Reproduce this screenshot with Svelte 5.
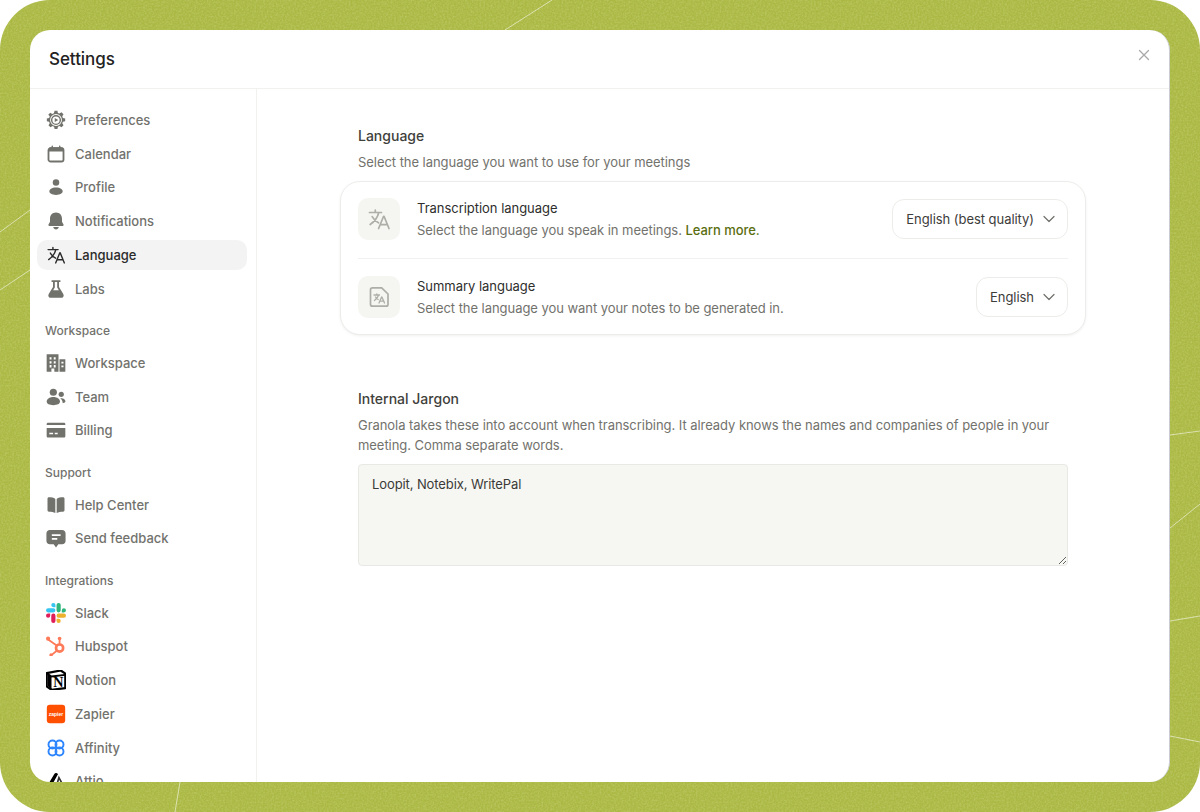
<script>
  const general = [
    { id: 'gear', label: 'Preferences' },
    { id: 'calendar', label: 'Calendar' },
    { id: 'person', label: 'Profile' },
    { id: 'bell', label: 'Notifications' },
    { id: 'translate', label: 'Language', active: true },
    { id: 'flask', label: 'Labs' }
  ];
  const sections = [
    { title: 'Workspace', items: [
      { id: 'building', label: 'Workspace' },
      { id: 'team', label: 'Team' },
      { id: 'card', label: 'Billing' }
    ]},
    { title: 'Support', items: [
      { id: 'book', label: 'Help Center' },
      { id: 'chat', label: 'Send feedback' }
    ]},
    { title: 'Integrations', items: [
      { id: 'slack', label: 'Slack' },
      { id: 'hubspot', label: 'Hubspot' },
      { id: 'notion', label: 'Notion' },
      { id: 'zapier', label: 'Zapier' },
      { id: 'affinity', label: 'Affinity' },
      { id: 'attio', label: 'Attio' }
    ]}
  ];
  const streaks = [
    'M505 30 L552 0', 'M0 232 L30 210', 'M0 290 L30 270', 'M175 812 L180 782',
    'M1170 435 L1200 431', 'M1170 528 L1200 504', 'M1170 621 L1200 616', 'M1170 736 L1200 742'
  ];
</script>

{#snippet translate()}
  <path class="line" d="M2.500 5.500h12M8.300 3v2.500M11.800 5.500c-1 4.200-4.300 9-8.600 12M5.200 9.600c1.500 2.700 3.600 4.900 6.300 6.200M11.600 21.500l5-12.200h.4l5 12.200M13.300 17.600h7"/>
{/snippet}

{#snippet icon(id)}
  <svg class="ico" viewBox="0 0 24 24" aria-hidden="true">
    {#if id === 'gear'}
      <path fill-rule="evenodd" d="M10.300.8h3.400l.6 2.700 1.900.8 2.400-1.500 2.400 2.400-1.500 2.400.8 1.900 2.700.6v3.400l-2.700.6-.8 1.900 1.500 2.400-2.400 2.400-2.400-1.500-1.900.8-.6 2.700h-3.400l-.6-2.700-1.900-.8-2.400 1.500-2.400-2.400 1.500-2.400-.8-1.900-2.700-.6v-3.400l2.700-.6.8-1.900L2.700 5.600l2.400-2.400 2.400 1.500 1.900-.8zM12 4.900a7.100 7.100 0 1 0 0 14.200 7.100 7.100 0 0 0 0-14.200z"/>
      <circle cx="12" cy="12" r="5.200" class="line"/>
      <path d="M10.500 9.500l4.200 2.500-4.200 2.500z"/>
    {:else if id === 'calendar'}
      <rect x="3" y="5" width="18" height="16" rx="2.500" class="line thick"/>
      <path d="M3 6.500A2.500 2.500 0 0 1 5.500 4h13A2.500 2.500 0 0 1 21 6.500V9H3z"/>
      <path class="line" d="M7.500 2.500v3M16.500 2.500v3"/>
    {:else if id === 'person'}
      <circle cx="12" cy="6.600" r="3.900"/>
      <path d="M12 12.600c5.200 0 8 2.300 8 4.600 0 2.400-3 4.300-8 4.300s-8-1.900-8-4.300c0-2.300 2.800-4.600 8-4.600z"/>
    {:else if id === 'bell'}
      <path d="M12 1.800c4.600 0 7.200 3.400 7.200 7.600v3.400l1.800 3.400c.4.900-.1 1.800-1 1.800H4c-.9 0-1.400-.9-1-1.800l1.800-3.400V9.400c0-4.200 2.600-7.600 7.200-7.600z"/>
      <path d="M8.600 19.300h6.800c-.4 1.800-1.800 2.900-3.400 2.900s-3-1.100-3.400-2.900z"/>
    {:else if id === 'translate'}
      {@render translate()}
    {:else if id === 'flask'}
      <path class="line thick" d="M7.500 2.500h9M9.500 2.500v7.500L4.200 18.500c-.9 1.600.1 3 1.800 3h12c1.700 0 2.700-1.400 1.800-3L14.500 10V2.500"/>
      <path d="M7 13.500h10l3 5c.7 1.300-.1 3-1.600 3H5.600c-1.500 0-2.300-1.700-1.600-3z"/>
    {:else if id === 'building'}
      <path fill-rule="evenodd" d="M.800 1.500H15v21h-5v-3.800H6.500v3.800H.800zM4.300 5v2.800h2.300V5zm5 0v2.800h2.300V5zM4.300 9.800v2.800h2.300V9.800zm5 0v2.800h2.300V9.800zM4.300 14.500v2.800h2.300v-2.800zm5 0v2.800h2.300v-2.800z"/>
      <path fill-rule="evenodd" d="M16.200 7.500h7v15h-7zm2.300 3v2.200h2.500v-2.200zm0 4.500v2.200h2.500V15z"/>
    {:else if id === 'team'}
      <circle cx="8.800" cy="6.300" r="4.300"/>
      <path d="M8.800 12c5 0 8 2.700 8 5.500 0 2.800-3.300 4.300-8 4.300S.800 20.300.800 17.500c0-2.800 3-5.500 8-5.500z"/>
      <circle cx="18.300" cy="8.800" r="3.100"/>
      <path d="M18.500 13.500c3 .1 4.800 1.900 4.800 3.700 0 1.100-.9 2-3.200 2.200-.1-2.300-1.100-4.300-3.100-5.800.5-.1 1-.1 1.500-.1z"/>
    {:else if id === 'card'}
      <path fill-rule="evenodd" d="M.800 5c0-.9.700-1.600 1.600-1.600h19.200c.9 0 1.600.7 1.600 1.600v1H.800zM.800 9.500h22.400v10c0 .9-.7 1.600-1.600 1.600H2.400c-.9 0-1.600-.7-1.600-1.600zM4 15.300v1.700h4.500v-1.700zm6.500 0v1.700h3.500v-1.700z"/>
    {:else if id === 'book'}
      <path d="M1.800 4.500C1.800 3.500 2.500 2.800 3.500 2.800c3 0 5.700.5 7.700 1.900V21.700c-2-1.200-4.700-1.700-7.700-1.700-1 0-1.700-.7-1.700-1.700z"/>
      <path d="M22.200 4.500c0-1-.7-1.700-1.700-1.700-3 0-5.700.5-7.700 1.900V21.700c2-1.200 4.700-1.700 7.700-1.700 1 0 1.700-.7 1.700-1.700z"/>
    {:else if id === 'chat'}
      <path fill-rule="evenodd" d="M4.500 2.500h15c2.200 0 4 1.800 4 4v9c0 2.200-1.800 4-4 4h-4.700L12 23.300 9.200 19.500H4.500c-2.200 0-4-1.800-4-4v-9c0-2.200 1.800-4 4-4zM7 7.500v2h10.500v-2zm0 4.500v2h6.500v-2z"/>
    {:else if id === 'slack'}
      <path fill="#E01E5A" d="M5.042 15.165a2.528 2.528 0 0 1-2.520 2.523A2.528 2.528 0 0 1 0 15.165a2.527 2.527 0 0 1 2.522-2.520h2.520v2.520zM6.313 15.165a2.527 2.527 0 0 1 2.521-2.520 2.527 2.527 0 0 1 2.521 2.520v6.313A2.528 2.528 0 0 1 8.834 24a2.528 2.528 0 0 1-2.521-2.522v-6.313z"/>
      <path fill="#36C5F0" d="M8.834 5.042a2.528 2.528 0 0 1-2.521-2.520A2.528 2.528 0 0 1 8.834 0a2.528 2.528 0 0 1 2.521 2.522v2.520H8.834zM8.834 6.313a2.528 2.528 0 0 1 2.521 2.521 2.528 2.528 0 0 1-2.521 2.521H2.522A2.528 2.528 0 0 1 0 8.834a2.528 2.528 0 0 1 2.522-2.521h6.312z"/>
      <path fill="#2EB67D" d="M18.956 8.834a2.528 2.528 0 0 1 2.522-2.521A2.528 2.528 0 0 1 24 8.834a2.528 2.528 0 0 1-2.522 2.521h-2.522V8.834zM17.688 8.834a2.528 2.528 0 0 1-2.523 2.521 2.527 2.527 0 0 1-2.520-2.521V2.522A2.527 2.527 0 0 1 15.165 0a2.528 2.528 0 0 1 2.523 2.522v6.312z"/>
      <path fill="#ECB22E" d="M15.165 18.956a2.528 2.528 0 0 1 2.523 2.522A2.528 2.528 0 0 1 15.165 24a2.527 2.527 0 0 1-2.520-2.522v-2.522h2.520zM15.165 17.688a2.527 2.527 0 0 1-2.520-2.523 2.526 2.526 0 0 1 2.520-2.520h6.313A2.527 2.527 0 0 1 24 15.165a2.528 2.528 0 0 1-2.522 2.523h-6.313z"/>
    {:else if id === 'hubspot'}
      <g fill="none" stroke="#FF7A59" stroke-linecap="round">
        <circle cx="16.300" cy="14.500" r="4.300" stroke-width="3.200"/>
        <path stroke-width="2.200" d="M16.300 9V3.500M12.800 11.500L3 4.500M12.500 18L6.500 23"/>
      </g>
      <circle cx="16.300" cy="3" r="2.200" fill="#FF7A59"/>
      <circle cx="2.500" cy="3.200" r="2.500" fill="#FF7A59"/>
      <circle cx="6" cy="22.800" r="2" fill="#FF7A59"/>
    {:else if id === 'notion'}
      <path d="M.800 3.800L17.800.600l5.400 3.800V21.800L6.600 23.700.800 19.600z" fill="#fff" stroke="#000" stroke-width="2.700" stroke-linejoin="round"/>
      <path d="M.800 3.800L6.600 7.800 23 5.800" fill="none" stroke="#000" stroke-width="2.200"/>
      <path d="M2 5v14l4.600 4V8z" fill="#000"/>
      <text x="14.800" y="20.600" text-anchor="middle" class="ntext">N</text>
    {:else if id === 'zapier'}
      <rect x="1" y="1" width="22" height="22" rx="3.500" fill="#FF4F00"/>
      <text x="12" y="14" text-anchor="middle" class="ztext">zapier</text>
    {:else if id === 'affinity'}
      <g fill="none" stroke="#2C85FF" stroke-width="2.300">
        <circle cx="7.800" cy="7.800" r="4.800"/>
        <circle cx="16.200" cy="7.800" r="4.800"/>
        <circle cx="7.800" cy="16.200" r="4.800"/>
        <circle cx="16.200" cy="16.200" r="4.800"/>
      </g>
    {:else if id === 'attio'}
      <path d="M2 17L10 3.500c.6-1 2-1.500 3-.9l1.500.9L6 19H3.500c-1.200 0-2.100-1-1.500-2z" fill="#000"/>
      <path d="M15.500 8L21 18c.4.800-.1 1.500-1 1.500h-8z" fill="none" stroke="#333" stroke-width="2"/>
    {/if}
  </svg>
{/snippet}

{#snippet chevron()}
  <svg class="chev" viewBox="0 0 12 8" aria-hidden="true"><path d="M1 1.500l5 5 5-5"/></svg>
{/snippet}

{#snippet navItem(item)}
  <div class="item" class:active={item.active}>
    {@render icon(item.id)}
    <span>{item.label}</span>
  </div>
{/snippet}

<div class="page">
  <svg class="backdrop" viewBox="0 0 1200 812" aria-hidden="true">
    <filter id="grain" x="0" y="0" width="100%" height="100%">
      <feTurbulence type="fractalNoise" baseFrequency="0.55" numOctaves="2" seed="4"/>
      <feColorMatrix values="0 0 0 0 .85  0 0 0 0 .88  0 0 0 0 .5  0 0 0 -1.100 .72"/>
    </filter>
    <rect width="1200" height="812" filter="url(#grain)" opacity=".4"/>
    {#each streaks as d}
      <path d={d} fill="none" stroke="#fff" stroke-opacity=".55" stroke-width="1"/>
    {/each}
  </svg>

  <div class="modal">
    <header>
      <h1>Settings</h1>
      <svg class="close" viewBox="0 0 12 12" aria-hidden="true"><path d="M1.500 1.500l9 9M10.500 1.500l-9 9"/></svg>
    </header>
    <div class="body">
      <aside>
        {#each general as item}
          {@render navItem(item)}
        {/each}
        {#each sections as section}
          <div class="label">{section.title}</div>
          {#each section.items as item}
            {@render navItem(item)}
          {/each}
        {/each}
      </aside>
      <main>
        <h2>Language</h2>
        <p class="sub">Select the language you want to use for your meetings</p>
        <section class="card">
          <div class="row first">
            <div class="tile">
              <svg class="tile-ico" viewBox="0 0 24 24" aria-hidden="true">{@render translate()}</svg>
            </div>
            <div class="copy">
              <div class="name">Transcription language</div>
              <div class="desc">Select the language you speak in meetings. <a href="#learn">Learn more.</a></div>
            </div>
            <div class="select"><span>English (best quality)</span>{@render chevron()}</div>
          </div>
          <div class="rule"></div>
          <div class="row second">
            <div class="tile">
              <svg class="tile-ico" viewBox="0 0 24 24" aria-hidden="true">
                <path class="line" d="M5.500 2.800h9.200L21 9v10.200c0 1.100-.9 2-2 2H5.500c-1.100 0-2-.9-2-2V4.800c0-1.100.9-2 2-2z"/>
                <path class="line thin" d="M7 10h5.500M9.800 9v1M11.500 10c-.5 2-2 4-4 5.500M8.500 12c.7 1 1.500 1.800 2.700 2.500M12 18l2.600-6h.3l2.600 6M13 16.200h4"/>
              </svg>
            </div>
            <div class="copy">
              <div class="name">Summary language</div>
              <div class="desc">Select the language you want your notes to be generated in.</div>
            </div>
            <div class="select"><span>English</span>{@render chevron()}</div>
          </div>
        </section>
        <h2 class="jargon">Internal Jargon</h2>
        <p class="para">Granola takes these into account when transcribing. It already knows the names and companies of people in your meeting. Comma separate words.</p>
        <textarea readonly value="Loopit, Notebix, WritePal"></textarea>
      </main>
    </div>
  </div>
</div>

<style>
  :global(body) { margin: 0; background: #fff; }
  .page {
    position: relative;
    width: 1200px;
    height: 812px;
    box-sizing: border-box;
    padding: 30px;
    overflow: hidden;
    border-radius: 50px;
    background: #abb944;
    font-family: Inter, "Liberation Sans", sans-serif;
  }
  .backdrop { position: absolute; inset: 0; width: 1200px; height: 812px; }
  .modal {
    position: relative;
    height: 752px;
    box-sizing: border-box;
    display: flex;
    flex-direction: column;
    overflow: hidden;
    border-radius: 20px;
    border-right: 1px solid #c9ccd2;
    background: #fff;
  }
  header {
    flex: none;
    height: 59px;
    box-sizing: border-box;
    display: flex;
    align-items: center;
    justify-content: space-between;
    padding: 0 19px;
    border-bottom: 1px solid #f1f1f0;
  }
  h1 { margin: 0; font-size: 17px; font-weight: 500; color: #222; letter-spacing: -.05px; }
  .close { width: 12px; height: 12px; margin-top: -8px; fill: none; stroke: #a9a9a9; stroke-width: 1.300; stroke-linecap: round; }
  .body { flex: 1; display: flex; min-height: 0; }
  aside {
    flex: none;
    width: 227px;
    box-sizing: border-box;
    padding: 15.750px 9px 0 7px;
    border-right: 1px solid #f1f1f0;
    overflow: hidden;
    display: flex;
    flex-direction: column;
  }
  .item {
    flex: none;
    height: 30px;
    margin-bottom: 3.750px;
    display: flex;
    align-items: center;
    gap: 9px;
    padding-left: 9px;
    border-radius: 10px;
    font-size: 13px;
    font-weight: 500;
    color: #72726d;
  }
  .item.active { background: #f3f3f3; color: #2b2b2b; }
  .ico { width: 20px; height: 20px; flex: none; fill: currentColor; }
  .line { fill: none; stroke: currentColor; stroke-width: 1.700; stroke-linecap: round; stroke-linejoin: round; }
  .line.thick { stroke-width: 2.200; }
  .line.thin { stroke-width: 1.300; }
  .ntext { font-family: "Liberation Serif", serif; font-size: 17px; font-weight: 700; fill: #000; }
  .ztext { font-family: "Liberation Sans", sans-serif; font-size: 6px; font-weight: 700; fill: #fff; }
  .label {
    flex: none;
    height: 18px;
    line-height: 18px;
    margin: 14.500px 0 8px 8px;
    font-size: 12px;
    font-weight: 500;
    color: #72726d;
  }
  main {
    flex: 1;
    box-sizing: border-box;
    padding: 37px 0 0 101px;
    min-width: 0;
  }
  h2 { margin: 0; font-size: 14px; line-height: 20px; font-weight: 500; color: #3f3f3c; }
  .sub, .para { margin: 0; font-size: 13px; line-height: 20px; color: #72726d; letter-spacing: -.05px; }
  .sub { margin-top: 6px; }
  .card {
    box-sizing: border-box;
    width: 746px;
    height: 154px;
    margin: 9px 0 0 -18px;
    padding: 0 17px;
    border: 1px solid #ececea;
    border-radius: 20px;
    background: #fff;
    box-shadow: 0 1px 3px rgba(0,0,0,.06);
    display: flex;
    flex-direction: column;
  }
  .row { display: flex; align-items: center; flex: none; box-sizing: border-box; }
  .first { height: 76px; padding-bottom: 2px; }
  .second { height: 75px; }
  .rule { height: 1px; flex: none; background: #f1f1ef; }
  .tile {
    width: 42px;
    height: 42px;
    flex: none;
    display: grid;
    place-items: center;
    border-radius: 10px;
    background: #f5f5f1;
  }
  .tile-ico { width: 24px; height: 24px; color: #aeaea8; }
  .copy { flex: 1; margin-left: 17px; min-width: 0; }
  .name { font-size: 13px; line-height: 20px; color: #2e2e2c; letter-spacing: -.03px; }
  .desc { font-size: 13px; line-height: 20px; margin-top: 2px; color: #72726d; letter-spacing: -.05px; }
  .desc a { color: #5a6e10; text-decoration: none; font-weight: 500; }
  .select {
    height: 40px;
    box-sizing: border-box;
    display: flex;
    align-items: center;
    gap: 9px;
    padding: 0 12px 0 13px;
    border: 1px solid #ececea;
    border-radius: 12px;
    font-size: 13px;
    letter-spacing: -.05px;
    color: #3c3c3a;
    background: #fff;
  }
  .chev { width: 12px; height: 8px; fill: none; stroke: #6f6f6b; stroke-width: 1.200; stroke-linecap: round; stroke-linejoin: round; }
  .jargon { margin-top: 54px; }
  .para { width: 710px; margin-top: 6px; }
  textarea {
    display: block;
    width: 710px;
    height: 102px;
    box-sizing: border-box;
    margin-top: 9px;
    padding: 10px 13px;
    border: 1px solid #e8e8e4;
    border-radius: 4px;
    background: #f6f6f2;
    font-family: inherit;
    font-size: 13px;
    letter-spacing: -.1px;
    line-height: 18px;
    color: #3a3a38;
    outline: none;
  }
</style>
